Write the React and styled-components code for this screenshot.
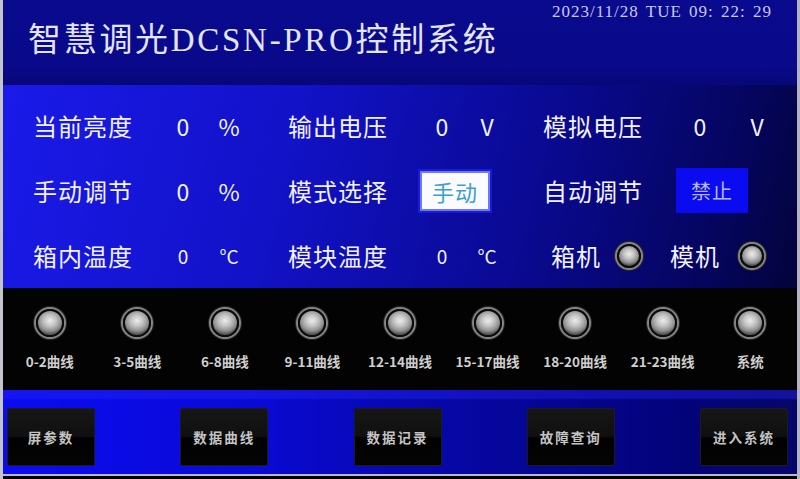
import React from "react";
import styled, { createGlobalStyle } from "styled-components";

const GlobalStyle = createGlobalStyle`
  html, body {
    margin: 0;
    padding: 0;
    background: #000;
  }
  body {
    font-family: "Noto Sans CJK SC", "Noto Sans", sans-serif;
  }
`;

const CJK = `"Noto Sans CJK SC", "Noto Sans", sans-serif`;
const SERIF = `"Liberation Serif", "Noto Sans CJK SC", serif`;

const Frame = styled.div`
  width: 800px;
  height: 479px;
  box-sizing: border-box;
  display: flex;
  flex-direction: column;
  border-left: 3px solid #c4c4cc;
  border-right: 3px solid #b4b4c0;
  overflow: hidden;
`;

const Header = styled.header`
  height: 85px;
  flex: none;
  display: flex;
  justify-content: space-between;
  align-items: flex-start;
  padding: 0 25px 0 25px;
  background: linear-gradient(180deg, #0a0a8e 0%, #09098a 80%, #070778 100%);
`;

const Title = styled.h1`
  margin: 20px 0 0;
  font-family: ${SERIF};
  font-weight: 400;
  font-size: 33px;
  letter-spacing: 2.7px;
  line-height: 40px;
  color: #e4e4fa;
  white-space: nowrap;
`;

const DateTime = styled.div`
  margin-top: 2px;
  font-family: ${SERIF};
  font-size: 17px;
  letter-spacing: 1px;
  word-spacing: 2px;
  color: #c8c8ee;
  white-space: nowrap;
`;

const Panel = styled.section`
  height: 203px;
  flex: none;
  box-sizing: border-box;
  padding: 8px 0 0 30px;
  display: grid;
  grid-template-rows: repeat(3, 65px);
  background: linear-gradient(105deg, #1a1aea 0%, #1212c8 35%, #0a0a94 65%, #050560 88%, #03033c 100%);
`;

const Row = styled.div`
  display: grid;
  grid-template-columns: repeat(3, 255px);
  align-items: center;
`;

const Group = styled.div`
  display: grid;
  grid-template-columns: ${(p) => p.$label}px 40px 40px;
  column-gap: ${(p) => p.$gap}px;
  align-items: center;
  color: #f2f2ff;
`;

const Label = styled.span`
  font-family: ${CJK};
  font-size: 24px;
  letter-spacing: 1px;
  white-space: nowrap;
`;

const Value = styled.span`
  justify-self: center;
  font-family: ${CJK};
  font-size: ${(p) => (p.$small ? "19px" : "23px")};
`;

const Toggle = styled.div`
  grid-column: 2 / span 2;
  justify-self: start;
  margin-left: ${(p) => (p.$on ? "-2px" : "-4px")};
  width: ${(p) => (p.$on ? "70px" : "72px")};
  height: ${(p) => (p.$on ? "40px" : "45px")};
  box-sizing: border-box;
  display: flex;
  align-items: center;
  justify-content: center;
  font-family: ${CJK};
  font-size: ${(p) => (p.$on ? "22px" : "20px")};
  letter-spacing: 1px;
  background: ${(p) => (p.$on ? "#fafaff" : "#0b0bf2")};
  color: ${(p) => (p.$on ? "#3c9fd2" : "#b8b8f4")};
  border: ${(p) => (p.$on ? "2px solid #6a7af0" : "none")};
  box-shadow: ${(p) => (p.$on ? "0 0 0 2px #1a1ad8" : "none")};
`;

const LampGroup = styled.div`
  display: flex;
  align-items: center;
  padding-left: 8px;
  color: #f2f2ff;
`;

const LampLabel = styled(Label)`
  margin-right: ${(p) => p.$gap}px;
`;

const Lamp = styled.span`
  flex: none;
  display: inline-block;
  box-sizing: border-box;
  width: ${(p) => p.$size}px;
  height: ${(p) => p.$size}px;
  border-radius: 50%;
  margin: 2px ${(p) => (p.$after || 0) + 2}px 2px 2px;
  border: 2px solid #0c0c0c;
  background: radial-gradient(ellipse 60% 55% at 50% 40%, #ececec 0%, #c6c6c6 40%, #8e8e8e 80%, #5a5a5a 100%);
  box-shadow: 0 0 0 2px #858585, 0 0 0 3px #2a2a2a;
`;

const Band = styled.section`
  height: 102px;
  flex: none;
  box-sizing: border-box;
  padding: 0 3px;
  display: grid;
  grid-template-columns: repeat(9, 1fr);
  background: #030303;
`;

const Channel = styled.div`
  display: flex;
  flex-direction: column;
  align-items: center;
  padding-top: 19px;
  gap: 12px;
`;

const ChannelName = styled.span`
  font-family: ${CJK};
  font-size: 13.5px;
  font-weight: 700;
  color: #cfcfcf;
  white-space: nowrap;
`;

const Menu = styled.nav`
  height: 84px;
  flex: none;
  box-sizing: border-box;
  padding: 18px 9px 0 4px;
  display: flex;
  justify-content: space-between;
  align-items: flex-start;
  background:
    linear-gradient(180deg, rgba(40, 40, 255, 0.35) 0px, rgba(40, 40, 255, 0.35) 8px, transparent 10px),
    linear-gradient(90deg, #0b0bf0 0%, #0a0ad8 30%, #0808b0 50%, #050590 70%, #03037a 85%, #06066a 100%);
`;

const MenuButton = styled.button`
  width: 88px;
  height: 58px;
  padding: 0;
  border: 1px solid #1c1c1c;
  border-radius: 2px;
  background: linear-gradient(180deg, #161616 0%, #101010 48%, #020202 52%, #040404 100%);
  color: #c4c4c4;
  font-family: ${CJK};
  font-size: 13.5px;
  font-weight: 700;
  letter-spacing: 2px;
  cursor: pointer;
`;

const Rim = styled.div`
  height: 2px;
  flex: none;
  background: #b8b8c8;
`;

const channels = [
  "0-2曲线",
  "3-5曲线",
  "6-8曲线",
  "9-11曲线",
  "12-14曲线",
  "15-17曲线",
  "18-20曲线",
  "21-23曲线",
  "系统",
];

const menu = ["屏参数", "数据曲线", "数据记录", "故障查询", "进入系统"];

const App = () => {
  return (
    <>
      <GlobalStyle />
      <Frame>
        <Header>
          <Title>智慧调光DCSN-PRO控制系统</Title>
          <DateTime>2023/11/28 TUE 09: 22: 29</DateTime>
        </Header>

        <Panel>
          <Row>
            <Group $label={124} $gap={6}>
              <Label>当前亮度</Label>
              <Value>0</Value>
              <Value>%</Value>
            </Group>
            <Group $label={129} $gap={5}>
              <Label>输出电压</Label>
              <Value>0</Value>
              <Value>V</Value>
            </Group>
            <Group $label={120} $gap={17}>
              <Label>模拟电压</Label>
              <Value>0</Value>
              <Value>V</Value>
            </Group>
          </Row>
          <Row>
            <Group $label={124} $gap={6}>
              <Label>手动调节</Label>
              <Value>0</Value>
              <Value>%</Value>
            </Group>
            <Group $label={129} $gap={5}>
              <Label>模式选择</Label>
              <Toggle $on>手动</Toggle>
            </Group>
            <Group $label={120} $gap={17}>
              <Label>自动调节</Label>
              <Toggle>禁止</Toggle>
            </Group>
          </Row>
          <Row>
            <Group $label={124} $gap={6}>
              <Label>箱内温度</Label>
              <Value $small>0</Value>
              <Value $small>°C</Value>
            </Group>
            <Group $label={129} $gap={5}>
              <Label>模块温度</Label>
              <Value $small>0</Value>
              <Value $small>°C</Value>
            </Group>
            <LampGroup>
              <LampLabel $gap={14}>箱机</LampLabel>
              <Lamp $size={24} $after={27} />
              <LampLabel $gap={18}>模机</LampLabel>
              <Lamp $size={24} />
            </LampGroup>
          </Row>
        </Panel>

        <Band>
          {channels.map((name) => (
            <Channel key={name}>
              <Lamp $size={28} />
              <ChannelName>{name}</ChannelName>
            </Channel>
          ))}
        </Band>

        <Menu>
          {menu.map((item) => (
            <MenuButton key={item}>{item}</MenuButton>
          ))}
        </Menu>
        <Rim />
      </Frame>
    </>
  );
};

export default App;
